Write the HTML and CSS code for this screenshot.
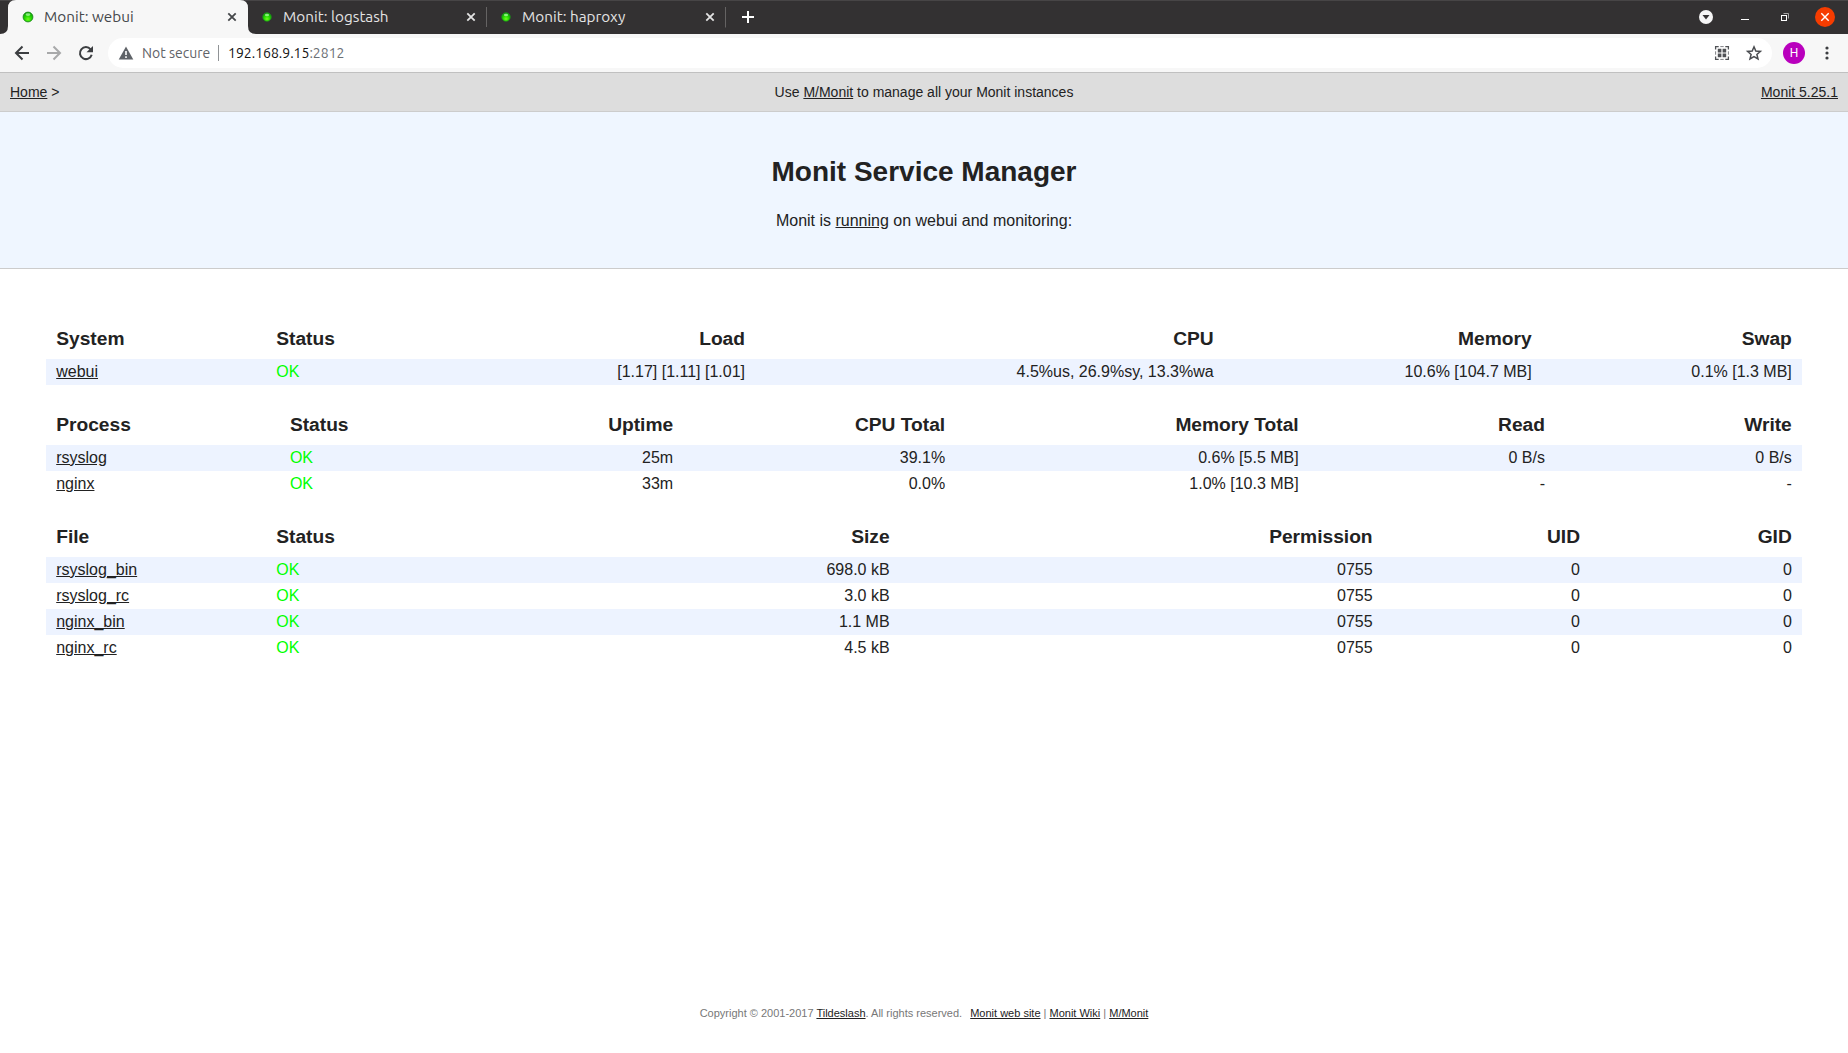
FILE: index.html
```html
<!DOCTYPE html>
<html lang="en">
<head>
<meta charset="utf-8">
<title>Monit: webui</title>
<link rel="stylesheet" href="styles.css">
</head>
<body>
<svg class="defs" width="0" height="0">
  <defs>
    <radialGradient id="led" cx="50%" cy="72%" r="62%">
      <stop offset="0" stop-color="#6cff1c"/><stop offset=".6" stop-color="#22d400"/><stop offset="1" stop-color="#12a808"/>
    </radialGradient>
    <symbol id="favicon" viewBox="0 0 16 16">
      <circle cx="8" cy="8" r="4.900" fill="url(#led)" stroke="#1c8a1c" stroke-width=".9"/>
      <ellipse cx="8" cy="5.600" rx="2.400" ry="1.400" fill="#b8ffb0" opacity=".7"/>
    </symbol>
    <symbol id="close" viewBox="0 0 16 16"><path d="M4.3 4.3l7.4 7.4M11.7 4.3l-7.4 7.4" stroke="currentColor" stroke-width="1.8"/></symbol>
  </defs>
</svg>

<header class="tabstrip">
  <div class="tab tab-active">
    <svg class="favicon" width="16" height="16"><use href="#favicon"/></svg>
    <span class="tab-title">Monit: webui</span>
    <svg class="tab-close" width="16" height="16"><use href="#close"/></svg>
  </div>
  <div class="tab">
    <svg class="favicon favicon-small" width="14" height="14"><use href="#favicon"/></svg>
    <span class="tab-title">Monit: logstash</span>
    <svg class="tab-close" width="16" height="16"><use href="#close"/></svg>
  </div>
  <div class="tab tab-divided">
    <svg class="favicon favicon-small" width="14" height="14"><use href="#favicon"/></svg>
    <span class="tab-title">Monit: haproxy</span>
    <svg class="tab-close" width="16" height="16"><use href="#close"/></svg>
  </div>
  <svg class="new-tab" width="44" height="34" viewBox="0 0 44 34"><path d="M.5 7v20.500" stroke="#656363"/><path d="M23 11v12M17 17h12" stroke="#fff" stroke-width="2"/></svg>
  <svg class="window-controls" width="156" height="34" viewBox="0 0 156 34">
    <circle cx="14" cy="17" r="7" fill="#f5f5f5"/><path d="M10.500 15h7L14 19.500z" fill="#333132"/>
    <path d="M49 19.500h8" stroke="#fff"/>
    <path d="M91.500 13.500h5v5" fill="none" stroke="#a5a4a4"/><rect x="89.500" y="15.500" width="5" height="5" fill="none" stroke="#fff"/>
    <circle cx="133" cy="17" r="10" fill="#f63c00"/><path d="M129.300 13.300l7.400 7.400M136.700 13.300l-7.400 7.400" stroke="#fff" stroke-width="1.400"/>
  </svg>
</header>

<div class="toolbar">
  <svg class="nav-icons" width="96" height="30" viewBox="0 0 96 30">
    <path d="M29 15H16.500M22.500 8.500L16 15l6.500 6.500" fill="none" stroke="#3c3e41" stroke-width="2"/>
    <path d="M47 15h12.500M53.500 8.500L60 15l-6.500 6.500" fill="none" stroke="#a8a9aa" stroke-width="2"/>
    <path d="M90.600 11.300A6 6 0 1 0 91.700 16.800" fill="none" stroke="#3c3e41" stroke-width="2"/><path d="M93 8v6.300h-6.500z" fill="#3c3e41"/>
  </svg>
  <div class="omnibox">
    <svg class="warning" width="16" height="14" viewBox="0 0 16 14"><path d="M8 .5L15.300 13.500H.7z" fill="#5f6368"/><path d="M8 5v4M8 10.200v1.800" stroke="#fff" stroke-width="1.600"/></svg>
    <span class="insecure">Not secure</span>
    <span class="separator"></span>
    <span class="address">192.168.9.15<span class="port">:2812</span></span>
    <svg class="omni-icons" width="60" height="30" viewBox="0 0 60 30">
      <path d="M7.600 11.500V8.600h3.100M17.300 8.600h3.100v2.900M20.400 18.500v2.900h-3.100M10.700 21.400H7.600v-2.900" fill="none" stroke="#505256" stroke-width="1.300"/>
      <path d="M12.300 8.600h3.400M12.300 21.400h3.400M7.600 13.300v3.400M20.400 13.300v3.400" stroke="#808286" stroke-width="1"/>
      <path d="M9.800 10.800h3.600v3.600H9.800zM14.600 10.800h3.600v3.600h-3.600zM9.800 15.600h3.600v3.600H9.800zM14.600 15.600h3.600v3.600h-3.600z" fill="#505256"/>
      <path d="M46 8.800l1.800 4.200 4.600.4-3.500 3 1.100 4.500-4-2.400-4 2.400 1.100-4.500-3.500-3 4.600-.4z" fill="none" stroke="#4a4c50" stroke-width="1.500"/>
    </svg>
  </div>
  <span class="avatar">H</span>
  <svg class="menu" width="6" height="16" viewBox="0 0 6 16"><circle cx="3" cy="3" r="1.600"/><circle cx="3" cy="8" r="1.600"/><circle cx="3" cy="13" r="1.600"/></svg>
</div>

<nav class="navbar">
  <div><a>Home</a> &gt;</div>
  <div class="nav-center">Use <a>M/Monit</a> to manage all your Monit instances</div>
  <div class="nav-right"><a>Monit 5.25.1</a></div>
</nav>

<section class="hero">
  <h1>Monit Service Manager</h1>
  <p>Monit is <a>running</a> on webui and monitoring:</p>
</section>

<main>
  <table>
    <colgroup><col class="w220"><col class="w489"><col class="w469"><col class="w318"><col></colgroup>
    <tr><th class="left">System</th><th class="left split">Status<span>Load</span></th><th>CPU</th><th>Memory</th><th>Swap</th></tr>
    <tr class="stripe"><td class="left"><a>webui</a></td><td class="left split"><b>OK</b><span>[1.17] [1.11] [1.01]</span></td><td>4.5%us, 26.9%sy, 13.3%wa</td><td>10.6% [104.7 MB]</td><td>0.1% [1.3 MB]</td></tr>
  </table>
  <table>
    <colgroup><col class="w234"><col class="w403"><col class="w272"><col class="w353"><col class="w247"><col></colgroup>
    <tr><th class="left">Process</th><th class="left split">Status<span>Uptime</span></th><th>CPU Total</th><th>Memory Total</th><th>Read</th><th>Write</th></tr>
    <tr class="stripe"><td class="left"><a>rsyslog</a></td><td class="left split"><b>OK</b><span>25m</span></td><td>39.1%</td><td>0.6% [5.5 MB]</td><td>0 B/s</td><td>0 B/s</td></tr>
    <tr><td class="left"><a>nginx</a></td><td class="left split"><b>OK</b><span>33m</span></td><td>0.0%</td><td>1.0% [10.3 MB]</td><td>-</td><td>-</td></tr>
  </table>
  <table>
    <colgroup><col class="w220"><col class="w633"><col class="w483"><col class="w208"><col></colgroup>
    <tr><th class="left">File</th><th class="left split">Status<span>Size</span></th><th>Permission</th><th>UID</th><th>GID</th></tr>
    <tr class="stripe"><td class="left"><a>rsyslog_bin</a></td><td class="left split"><b>OK</b><span>698.0 kB</span></td><td>0755</td><td>0</td><td>0</td></tr>
    <tr><td class="left"><a>rsyslog_rc</a></td><td class="left split"><b>OK</b><span>3.0 kB</span></td><td>0755</td><td>0</td><td>0</td></tr>
    <tr class="stripe"><td class="left"><a>nginx_bin</a></td><td class="left split"><b>OK</b><span>1.1 MB</span></td><td>0755</td><td>0</td><td>0</td></tr>
    <tr><td class="left"><a>nginx_rc</a></td><td class="left split"><b>OK</b><span>4.5 kB</span></td><td>0755</td><td>0</td><td>0</td></tr>
  </table>
</main>

<footer>Copyright © 2001-2017 <a>Tildeslash</a>. All rights reserved. <span class="links"><a>Monit web site</a> | <a>Monit Wiki</a> | <a>M/Monit</a></span></footer>
</body>
</html>
```
FILE: styles.css
```css
* { box-sizing: border-box; }
body {
  margin: 0;
  height: 1053px;
  display: flex;
  flex-direction: column;
  background: #fff;
  color: #222;
  font: 16px/20px "Liberation Sans", Arial, sans-serif;
  overflow: hidden;
}
a { color: #222; text-decoration: underline; }
svg { display: block; flex: none; }
.defs { position: absolute; }

/* browser window */
.tabstrip, .toolbar { font-family: Ubuntu, "Noto Sans", sans-serif; }
.tabstrip {
  height: 34px;
  display: flex;
  padding-left: 8px;
  background: #333132;
  box-shadow: inset 0 1px #474546;
}
.tab {
  width: 239px;
  height: 34px;
  display: flex;
  align-items: center;
  padding: 0 7px 0 12px;
  color: #e3e3e3;
  font-size: 15.3px;
}
.tab-active {
  width: 240px;
  margin-right: -1px;
  padding-right: 8px;
  background: #f7f7f7;
  color: #45474a;
  box-shadow: -8px 8px 0 0 #f7f7f7, 8px 8px 0 0 #f7f7f7;
  clip-path: path("M-8 34Q0 34 0 26V8Q0 0 8 0H232Q240 0 240 8V26Q240 34 248 34Z");
}
.favicon { margin-right: 8px; }
.favicon-small { margin: 0 9px 0 1px; }
.tab-divided { background: linear-gradient(#656363, #656363) 0 7px / 1px 20px no-repeat; }
.tab-title { flex: 1; white-space: nowrap; }
.window-controls { margin-left: auto; }

.toolbar {
  height: 39px;
  display: flex;
  align-items: center;
  padding: 0 18px 1px 0;
  background: #f7f7f7;
  border-bottom: 1px solid #c0c0c0;
}
.omnibox {
  margin-left: 12px;
  flex: 1;
  height: 30px;
  display: flex;
  align-items: center;
  padding-left: 10px;
  border-radius: 15px;
  background: #fff;
  font-size: 14px;
}
.warning { margin-right: 8px; }
.insecure { width: 76px; color: #5f6368; white-space: nowrap; }
.separator { width: 1px; height: 16px; background: #909396; margin-right: 9px; }
.address { color: #111; white-space: nowrap; }
.port { color: #6b6f74; }
.omni-icons { margin-left: auto; margin-right: 4px; }
.avatar {
  width: 22px;
  height: 22px;
  margin: 0 19px 0 11px;
  border-radius: 50%;
  background: #b900bd;
  color: #fff;
  font: 12px/22px Roboto, sans-serif;
  text-align: center;
}
.menu { fill: #3c3e41; }

/* page header */
.navbar {
  height: 39px;
  display: grid;
  grid-template-columns: 1fr auto 1fr;
  align-items: center;
  padding: 0 10px;
  background: #ddd;
  border-bottom: 1px solid #ccc;
  font-size: 14px;
}
.nav-right { text-align: right; }
.hero {
  height: 157px;
  padding-top: 43px;
  background: #eff6ff;
  border-bottom: 1px solid #ccc;
  text-align: center;
}
h1 { margin: 0; font-size: 28px; line-height: 34px; }
.hero p { margin: 22px 0 0; }

/* service tables */
main { width: 95%; margin: 50px auto 0; display: grid; gap: 20px; }
table { width: 100%; table-layout: fixed; border-collapse: collapse; }
th, td { padding: 0 10px; text-align: right; white-space: nowrap; }
th { height: 40px; font-size: 19.2px; }
td { height: 26px; }
.left { text-align: left; }
.split span { float: right; }
.stripe { background: #edf3ff; }
b { font-weight: normal; color: #0f0; }
.w208 { width: 207.400px; }
.w220 { width: 220px; }
.w234 { width: 233.700px; }
.w247 { width: 246.300px; }
.w272 { width: 272px; }
.w318 { width: 318px; }
.w353 { width: 353.500px; }
.w403 { width: 403.300px; }
.w469 { width: 468.700px; }
.w483 { width: 483px; }
.w489 { width: 488.800px; }
.w633 { width: 633.400px; }

footer {
  margin-top: auto;
  padding-bottom: 30px;
  text-align: center;
  color: #777;
  font-size: 11px;
}
.links { margin-left: 5px; }
```
